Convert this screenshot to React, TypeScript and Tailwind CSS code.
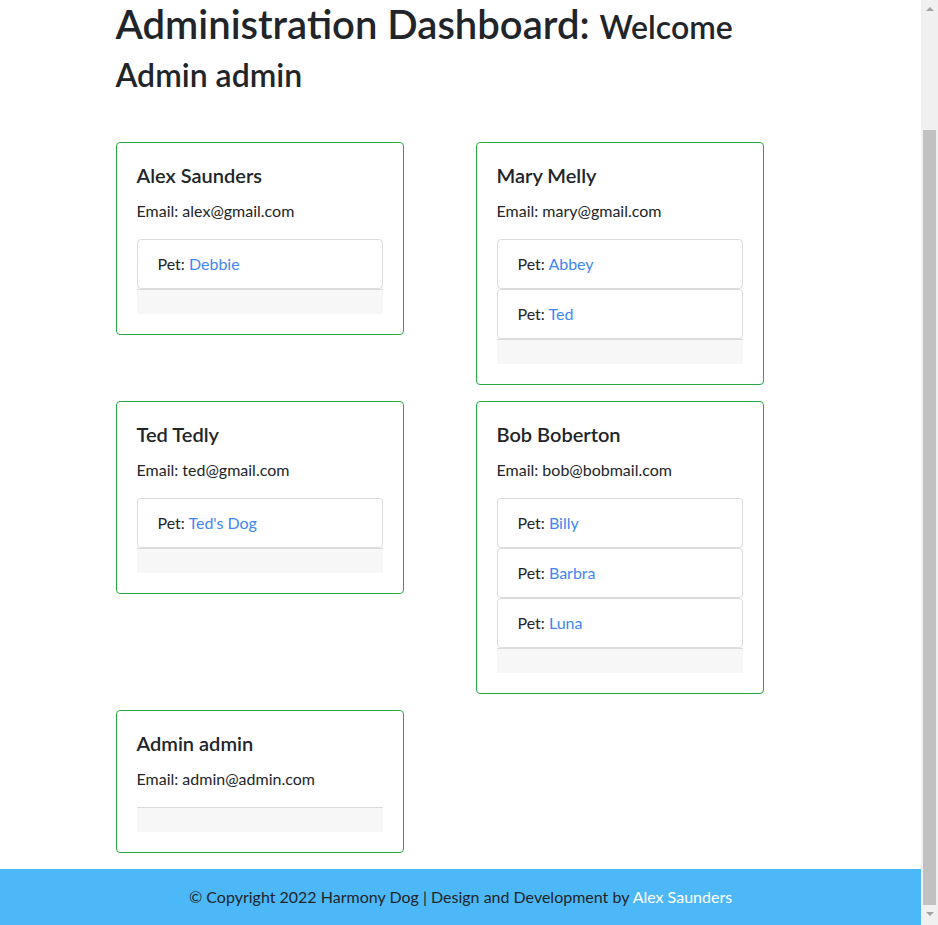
const users = [
  { name: "Alex Saunders", email: "alex@gmail.com", pets: ["Debbie"] },
  { name: "Mary Melly", email: "mary@gmail.com", pets: ["Abbey", "Ted"] },
  { name: "Ted Tedly", email: "ted@gmail.com", pets: ["Ted's Dog"] },
  { name: "Bob Boberton", email: "bob@bobmail.com", pets: ["Billy", "Barbra", "Luna"] },
  { name: "Admin admin", email: "admin@admin.com", pets: [] as string[] },
];

function UserCard({ name, email, pets }: { name: string; email: string; pets: string[] }) {
  return (
    <div className="w-[288px] mb-4 border border-[#28a745] rounded p-5">
      <h5 className="text-[20px] leading-[24px] font-semibold mb-3">{name}</h5>
      <p className="text-base leading-6 mb-4">Email: {email}</p>
      {pets.map((pet) => (
        <div key={pet} className="border border-[#dcdcdc] rounded px-5 py-3 leading-6">
          Pet: <a href="#" className="text-[#3f86f5]">{pet}</a>
        </div>
      ))}
      <div className="h-[25px] bg-[#f7f7f7] border-t border-[#dcdcdc]" />
    </div>
  );
}

function Scrollbar() {
  return (
    <div className="w-[17px] bg-[#f0f0f0] flex flex-col items-center shrink-0">
      <div className="h-[17px] flex items-center justify-center">
        <div className="w-0 h-0 border-l-4 border-r-4 border-b-4 border-l-transparent border-r-transparent border-b-[#a3a3a3]" />
      </div>
      <div className="mt-[113px] w-[13px] h-[775px] bg-[#c1c1c1]" />
      <div className="h-[17px] flex items-center justify-center">
        <div className="w-0 h-0 border-l-4 border-r-4 border-t-4 border-l-transparent border-r-transparent border-t-[#a3a3a3]" />
      </div>
    </div>
  );
}

export default function App() {
  return (
    <div
      className="flex h-[925px] overflow-hidden bg-white text-[#212529]"
      style={{ fontFamily: "Lato, 'Open Sans', sans-serif" }}
    >
      <div className="flex-1 flex flex-col">
        <div className="w-[690px] mx-auto">
          <h1 className="h-24 text-[40px] leading-[48px] font-semibold">
            Administration Dashboard: <span className="text-[32px] leading-none">Welcome Admin admin</span>
          </h1>
          <div className="grid grid-cols-[360px_330px] mt-[46px]">
            {users.map((u) => (
              <div key={u.name}>
                <UserCard {...u} />
              </div>
            ))}
          </div>
        </div>
        <footer className="mt-auto bg-[#4db8f7] py-4 text-center leading-6">
          © Copyright 2022 Harmony Dog | Design and Development by{" "}
          <a href="#" className="text-white">Alex Saunders</a>
        </footer>
      </div>
      <Scrollbar />
    </div>
  );
}
